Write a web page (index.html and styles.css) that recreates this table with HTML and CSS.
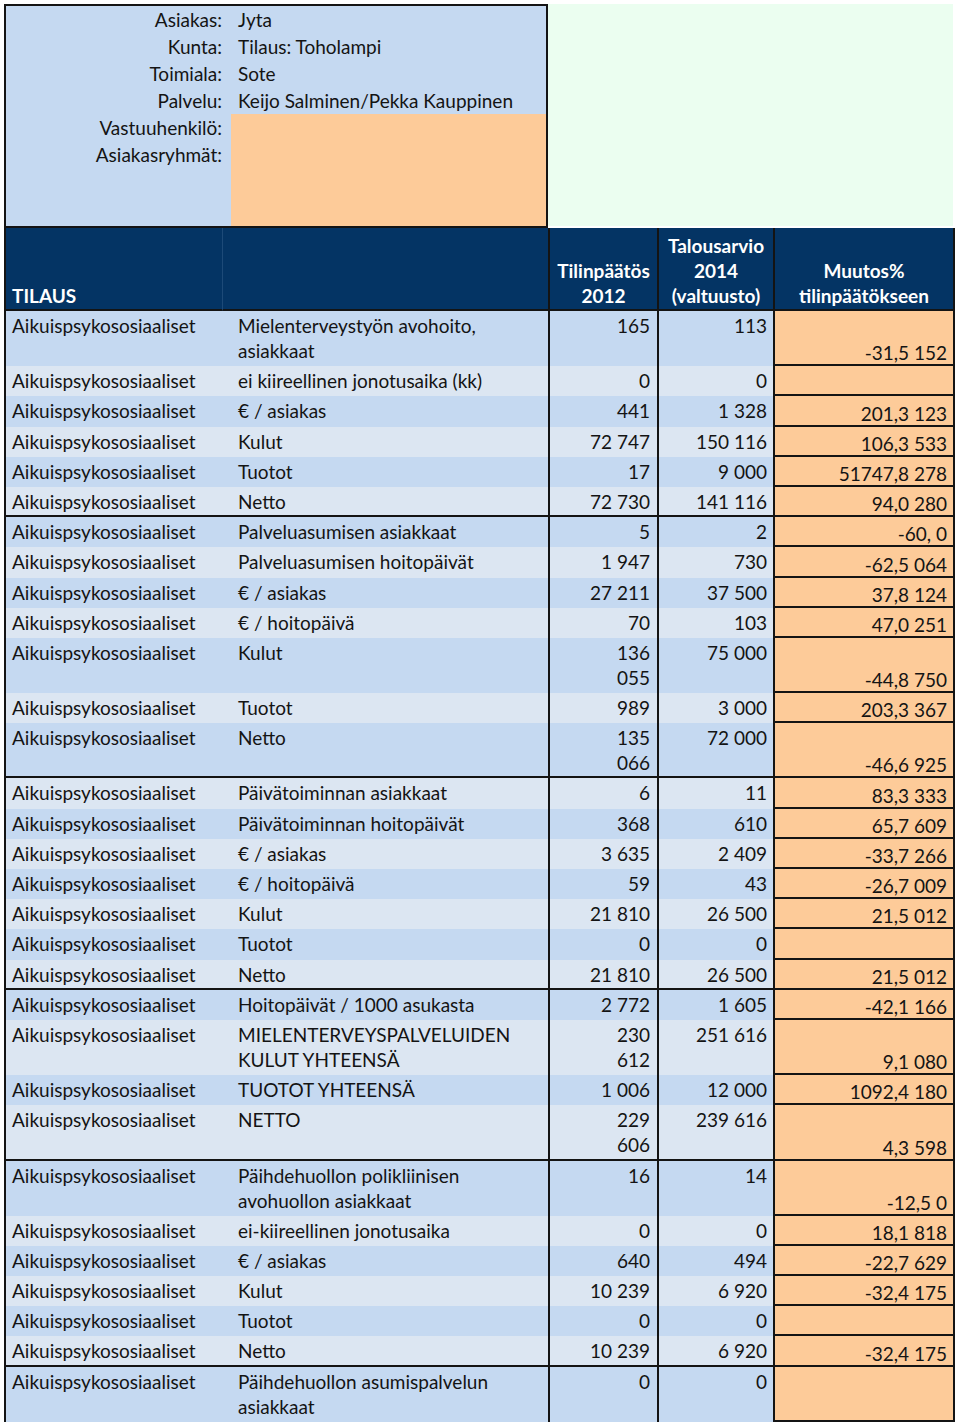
FILE: index.html
```html
<!DOCTYPE html>
<html lang="fi">
<head>
<meta charset="utf-8">
<title>Tilaus: Toholampi</title>
<link rel="stylesheet" href="styles.css">
</head>
<body>
<div class="page">
  <div class="info">
    <div class="info-card">
      <div class="lbl">Asiakas:</div><div class="val">Jyta</div>
      <div class="lbl">Kunta:</div><div class="val">Tilaus: Toholampi</div>
      <div class="lbl">Toimiala:</div><div class="val">Sote</div>
      <div class="lbl">Palvelu:</div><div class="val">Keijo Salminen/Pekka Kauppinen</div>
      <div class="lbl">Vastuuhenkilö:</div><div class="val blank"></div>
      <div class="lbl">Asiakasryhmät:</div><div class="val blank"></div>
      <div class="lbl"></div><div class="val blank"></div>
    </div>
    <div class="info-side"></div>
  </div>

  <div class="head">
    <div class="h1">TILAUS</div>
    <div class="h2"></div>
    <div class="h3">Tilinpäätös<br>2012</div>
    <div class="h4">Talousarvio<br>2014<br>(valtuusto)</div>
    <div class="h5">Muutos%<br>tilinpäätökseen</div>
  </div>

  <div class="body">
    <div class="row"><div class="c1">Aikuispsykososiaaliset</div><div class="c2">Mielenterveystyön avohoito,<br>asiakkaat</div><div class="c3">165</div><div class="c4">113</div><div class="c5">-31,5 152</div></div>
    <div class="row"><div class="c1">Aikuispsykososiaaliset</div><div class="c2">ei kiireellinen jonotusaika (kk)</div><div class="c3">0</div><div class="c4">0</div><div class="c5"></div></div>
    <div class="row"><div class="c1">Aikuispsykososiaaliset</div><div class="c2">€ / asiakas</div><div class="c3">441</div><div class="c4">1 328</div><div class="c5">201,3 123</div></div>
    <div class="row"><div class="c1">Aikuispsykososiaaliset</div><div class="c2">Kulut</div><div class="c3">72 747</div><div class="c4">150 116</div><div class="c5">106,3 533</div></div>
    <div class="row"><div class="c1">Aikuispsykososiaaliset</div><div class="c2">Tuotot</div><div class="c3">17</div><div class="c4">9 000</div><div class="c5">51747,8 278</div></div>
    <div class="row sect"><div class="c1">Aikuispsykososiaaliset</div><div class="c2">Netto</div><div class="c3">72 730</div><div class="c4">141 116</div><div class="c5">94,0 280</div></div>
    <div class="row"><div class="c1">Aikuispsykososiaaliset</div><div class="c2">Palveluasumisen asiakkaat</div><div class="c3">5</div><div class="c4">2</div><div class="c5">-60, 0</div></div>
    <div class="row"><div class="c1">Aikuispsykososiaaliset</div><div class="c2">Palveluasumisen hoitopäivät</div><div class="c3">1 947</div><div class="c4">730</div><div class="c5">-62,5 064</div></div>
    <div class="row"><div class="c1">Aikuispsykososiaaliset</div><div class="c2">€ / asiakas</div><div class="c3">27 211</div><div class="c4">37 500</div><div class="c5">37,8 124</div></div>
    <div class="row"><div class="c1">Aikuispsykososiaaliset</div><div class="c2">€ / hoitopäivä</div><div class="c3">70</div><div class="c4">103</div><div class="c5">47,0 251</div></div>
    <div class="row"><div class="c1">Aikuispsykososiaaliset</div><div class="c2">Kulut</div><div class="c3">136<br>055</div><div class="c4">75 000</div><div class="c5">-44,8 750</div></div>
    <div class="row"><div class="c1">Aikuispsykososiaaliset</div><div class="c2">Tuotot</div><div class="c3">989</div><div class="c4">3 000</div><div class="c5">203,3 367</div></div>
    <div class="row sect"><div class="c1">Aikuispsykososiaaliset</div><div class="c2">Netto</div><div class="c3">135<br>066</div><div class="c4">72 000</div><div class="c5">-46,6 925</div></div>
    <div class="row"><div class="c1">Aikuispsykososiaaliset</div><div class="c2">Päivätoiminnan asiakkaat</div><div class="c3">6</div><div class="c4">11</div><div class="c5">83,3 333</div></div>
    <div class="row"><div class="c1">Aikuispsykososiaaliset</div><div class="c2">Päivätoiminnan hoitopäivät</div><div class="c3">368</div><div class="c4">610</div><div class="c5">65,7 609</div></div>
    <div class="row"><div class="c1">Aikuispsykososiaaliset</div><div class="c2">€ / asiakas</div><div class="c3">3 635</div><div class="c4">2 409</div><div class="c5">-33,7 266</div></div>
    <div class="row"><div class="c1">Aikuispsykososiaaliset</div><div class="c2">€ / hoitopäivä</div><div class="c3">59</div><div class="c4">43</div><div class="c5">-26,7 009</div></div>
    <div class="row"><div class="c1">Aikuispsykososiaaliset</div><div class="c2">Kulut</div><div class="c3">21 810</div><div class="c4">26 500</div><div class="c5">21,5 012</div></div>
    <div class="row"><div class="c1">Aikuispsykososiaaliset</div><div class="c2">Tuotot</div><div class="c3">0</div><div class="c4">0</div><div class="c5"></div></div>
    <div class="row sect"><div class="c1">Aikuispsykososiaaliset</div><div class="c2">Netto</div><div class="c3">21 810</div><div class="c4">26 500</div><div class="c5">21,5 012</div></div>
    <div class="row"><div class="c1">Aikuispsykososiaaliset</div><div class="c2">Hoitopäivät / 1000 asukasta</div><div class="c3">2 772</div><div class="c4">1 605</div><div class="c5">-42,1 166</div></div>
    <div class="row"><div class="c1">Aikuispsykososiaaliset</div><div class="c2">MIELENTERVEYSPALVELUIDEN<br>KULUT YHTEENSÄ</div><div class="c3">230<br>612</div><div class="c4">251 616</div><div class="c5">9,1 080</div></div>
    <div class="row"><div class="c1">Aikuispsykososiaaliset</div><div class="c2">TUOTOT YHTEENSÄ</div><div class="c3">1 006</div><div class="c4">12 000</div><div class="c5">1092,4 180</div></div>
    <div class="row sect"><div class="c1">Aikuispsykososiaaliset</div><div class="c2">NETTO</div><div class="c3">229<br>606</div><div class="c4">239 616</div><div class="c5">4,3 598</div></div>
    <div class="row"><div class="c1">Aikuispsykososiaaliset</div><div class="c2">Päihdehuollon polikliinisen<br>avohuollon asiakkaat</div><div class="c3">16</div><div class="c4">14</div><div class="c5">-12,5 0</div></div>
    <div class="row"><div class="c1">Aikuispsykososiaaliset</div><div class="c2">ei-kiireellinen jonotusaika</div><div class="c3">0</div><div class="c4">0</div><div class="c5">18,1 818</div></div>
    <div class="row"><div class="c1">Aikuispsykososiaaliset</div><div class="c2">€ / asiakas</div><div class="c3">640</div><div class="c4">494</div><div class="c5">-22,7 629</div></div>
    <div class="row"><div class="c1">Aikuispsykososiaaliset</div><div class="c2">Kulut</div><div class="c3">10 239</div><div class="c4">6 920</div><div class="c5">-32,4 175</div></div>
    <div class="row"><div class="c1">Aikuispsykososiaaliset</div><div class="c2">Tuotot</div><div class="c3">0</div><div class="c4">0</div><div class="c5"></div></div>
    <div class="row sect"><div class="c1">Aikuispsykososiaaliset</div><div class="c2">Netto</div><div class="c3">10 239</div><div class="c4">6 920</div><div class="c5">-32,4 175</div></div>
    <div class="row"><div class="c1">Aikuispsykososiaaliset</div><div class="c2">Päihdehuollon asumispalvelun<br>asiakkaat</div><div class="c3">0</div><div class="c4">0</div><div class="c5"></div></div>
  </div>
</div>
</body>
</html>
```

FILE: styles.css
```css
* {
  box-sizing: border-box;
}

html,
body {
  margin: 0;
  padding: 0;
  background: #ffffff;
}

body {
  font-family: Lato, "Open Sans", sans-serif;
  font-size: 19px;
  color: #141414;
}

.page {
  width: 960px;
  padding: 4px 0 0 4px;
}

/* ---------- top info block ---------- */
.info {
  display: flex;
  height: 224px;
}

.info-card {
  width: 544px;
  height: 224px;
  border: 2px solid #141414;
  background: #c5d9f1;
  display: grid;
  grid-template-columns: 225px 1fr;
  grid-template-rows: repeat(6, 27px) 1fr;
  line-height: 27px;
}

.lbl {
  text-align: right;
  padding-right: 9px;
}

.val {
  padding-left: 7px;
  white-space: nowrap;
}

.val.blank {
  background: #fdcb99;
}

.info-side {
  width: 405px;
  height: 222px;
  background: #ebfef0;
}

/* ---------- table header ---------- */
.head,
.row {
  display: grid;
  grid-template-columns: 218px 326px 109px 116px 182px;
  width: 951px;
}

.head {
  height: 83px;
  background: #043464;
  color: #ffffff;
  font-weight: 700;
  line-height: 25px;
}

.head > div {
  border-bottom: 2px solid #141414;
  display: flex;
  flex-direction: column;
  justify-content: flex-end;
  padding-bottom: 1px;
  text-align: center;
}

.head .h1 {
  border-left: 2px solid #141414;
  text-align: left;
  padding-left: 6px;
}

.head .h2 {
  border-left: 1px solid #1d4a78;
}

.head .h3,
.head .h4 {
  border-left: 2px solid #141414;
}

.head .h5 {
  border-left: 2px solid #141414;
  border-right: 2px solid #141414;
}

/* ---------- table body ---------- */
.row {
  line-height: 25px;
  white-space: nowrap;
  background: #dce6f2;
}

.row:nth-child(odd) {
  background: #c5d9f1;
}

.c1 {
  border-left: 2px solid #141414;
  padding: 2px 0 3.2px 6px;
}

.c2 {
  padding: 2px 0 3.2px 16px;
}

.c3,
.c4 {
  border-left: 2px solid #141414;
  padding: 2px 7px 3.2px 0;
  text-align: right;
}

.c4 {
  padding-right: 6px;
}

.c5 {
  background: #fdcb99;
  border-left: 2px solid #141414;
  border-right: 2px solid #141414;
  border-bottom: 2px solid #141414;
  padding: 0 6px 0 0;
  line-height: 22px;
  display: flex;
  align-items: flex-end;
  justify-content: flex-end;
}

.row.sect .c1,
.row.sect .c2,
.row.sect .c3,
.row.sect .c4 {
  border-bottom: 2px solid #141414;
  padding-bottom: 1.2px;
}
```
